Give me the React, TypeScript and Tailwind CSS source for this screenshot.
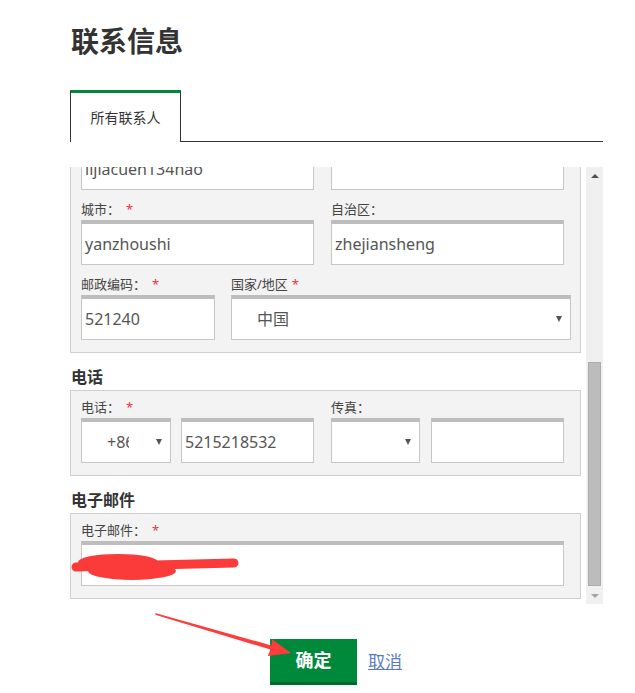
import React from "react";

const Label = ({ text, req }: { text: string; req?: boolean }) => (
  <div className="text-[13px] leading-[18px] text-[#444] whitespace-nowrap h-[18px]">
    {text}
    {req && <span className="text-[#e0393e] ml-[6px]">*</span>}
  </div>
);

const Input = ({ value, w }: { value?: string; w: string }) => (
  <div
    className={`${w} h-[45px] bg-white border border-[#c6c6c6] border-t-[4px] border-t-[#bdbdbd] px-[3px] flex items-center text-[16px] text-[#555] overflow-hidden whitespace-nowrap`}
  >
    {value}
  </div>
);

const Caret = () => (
  <span className="inline-block w-0 h-0 border-l-[3px] border-r-[3px] border-t-[6px] border-l-transparent border-r-transparent border-t-[#555]" />
);

const Select = ({ value, w, pl, clip }: { value?: string; w: string; pl: string; clip?: boolean }) => (
  <div
    className={`${w} h-[45px] bg-white border border-[#c6c6c6] border-t-[4px] border-t-[#bdbdbd] flex items-center justify-between pr-[8px] text-[#555]`}
  >
    <span className={`${pl} text-[16px] whitespace-nowrap`}>
      {clip ? (
        <span className="inline-block w-[22px] overflow-hidden align-bottom">{value}</span>
      ) : (
        value
      )}
    </span>
    <Caret />
  </div>
);

const Panel = ({ children }: { children: React.ReactNode }) => (
  <div className="border border-[#cfcfcf] bg-[#f3f3f3] pl-[10px] pr-[16px] pt-[7px] pb-[12px]">{children}</div>
);

const Heading = ({ text }: { text: string }) => (
  <div className="text-[16px] leading-[24px] font-bold text-[#333] mb-[1px] pl-[1px]">{text}</div>
);

export default function App() {
  return (
    <div className="relative w-[635px] h-[693px] bg-white overflow-hidden font-['Noto_Sans','Noto_Sans_CJK_SC',sans-serif]">
      <div className="ml-[70px] w-[533px] pt-[21px]">
        <h1 className="text-[28px] leading-[40px] font-bold text-[#333] pl-[1px]">联系信息</h1>

        <div className="mt-[29px] h-[52px] flex">
          <div className="w-[111px] h-full bg-white border-t-[3px] border-t-[#00893a] border-l border-r border-l-[#333] border-r-[#333] flex items-center justify-center text-[14px] text-[#333]">
            所有联系人
          </div>
          <div className="flex-1 self-end h-px bg-[#333]" />
        </div>

        <div className="mt-[25px] h-[437px] flex">
          <div className="w-[511px] overflow-hidden">
            <div className="-mt-[30px]">
              <Panel>
                <div className="flex gap-[17px]">
                  <Input w="w-[233px]" value="lijiacuen134hao" />
                  <Input w="w-[233px]" />
                </div>
                <div className="flex gap-[17px] mt-[10px]">
                  <div>
                    <Label text="城市：" req />
                    <div className="mt-[2px]">
                      <Input w="w-[233px]" value="yanzhoushi" />
                    </div>
                  </div>
                  <div>
                    <Label text="自治区：" />
                    <div className="mt-[2px]">
                      <Input w="w-[233px]" value="zhejiansheng" />
                    </div>
                  </div>
                </div>
                <div className="flex gap-[16px] mt-[10px]">
                  <div>
                    <Label text="邮政编码：" req />
                    <div className="mt-[2px]">
                      <Input w="w-[134px]" value="521240" />
                    </div>
                  </div>
                  <div>
                    <div className="text-[13px] leading-[18px] text-[#444] h-[18px] whitespace-nowrap">
                      国家/地区<span className="text-[#e0393e] ml-[4px]">*</span>
                    </div>
                    <div className="mt-[2px]">
                      <Select w="w-[340px]" pl="pl-[25px]" value="中国" />
                    </div>
                  </div>
                </div>
              </Panel>

              <div className="mt-[12px]">
                <Heading text="电话" />
                <Panel>
                  <div className="flex gap-[17px]">
                    <div>
                      <Label text="电话：" req />
                      <div className="mt-[2px] flex gap-[10px]">
                        <Select w="w-[90px]" pl="pl-[25px]" value="+86" clip />
                        <Input w="w-[133px]" value="5215218532" />
                      </div>
                    </div>
                    <div>
                      <Label text="传真：" />
                      <div className="mt-[2px] flex gap-[11px]">
                        <Select w="w-[89px]" pl="pl-[25px]" />
                        <Input w="w-[133px]" />
                      </div>
                    </div>
                  </div>
                </Panel>
              </div>

              <div className="mt-[12px]">
                <Heading text="电子邮件" />
                <Panel>
                  <Label text="电子邮件：" req />
                  <div className="mt-[2px]">
                    <Input w="w-[483px]" />
                  </div>
                </Panel>
              </div>
            </div>
          </div>

          <div className="ml-[5px] w-[17px] h-full bg-[#f0f0f0] flex flex-col">
            <div className="h-[17px] flex items-center justify-center">
              <span className="inline-block w-0 h-0 border-l-[4px] border-r-[4px] border-b-[4px] border-l-transparent border-r-transparent border-b-[#505050]" />
            </div>
            <div className="flex-1 px-[2px]">
              <div className="mt-[178px] h-[224px] bg-[#bcbcbc] border border-[#acacac]" />
            </div>
            <div className="h-[17px] flex items-center justify-center">
              <span className="inline-block w-0 h-0 border-l-[4px] border-r-[4px] border-t-[4px] border-l-transparent border-r-transparent border-t-[#a3a3a3]" />
            </div>
          </div>
        </div>

        <div className="mt-[35px] ml-[200px] flex items-center">
          <button className="w-[87px] h-[46px] bg-[#00893a] border-b-[3px] border-b-[#006d2d] text-white text-[18px] font-bold flex items-center justify-center">
            确定
          </button>
          <a className="ml-[11px] text-[17px] text-[#5a7cbf] underline cursor-pointer">取消</a>
        </div>
      </div>

      <svg className="absolute left-0 top-0 pointer-events-none" width="635" height="693" viewBox="0 0 635 693">
        <g fill="#fb3a3a" stroke="none">
          <ellipse cx="118" cy="562" rx="40" ry="8" />
          <ellipse cx="132" cy="571" rx="44" ry="9" />
        </g>
        <path d="M76 567 L234 563" stroke="#fb3a3a" strokeWidth="9" strokeLinecap="round" fill="none" />
        <polygon points="155,613 156,615 270.5,649.5 267.7,656 291,653 272.1,639.2 271.5,645.5" fill="#ff3b3b" />
      </svg>
    </div>
  );
}
